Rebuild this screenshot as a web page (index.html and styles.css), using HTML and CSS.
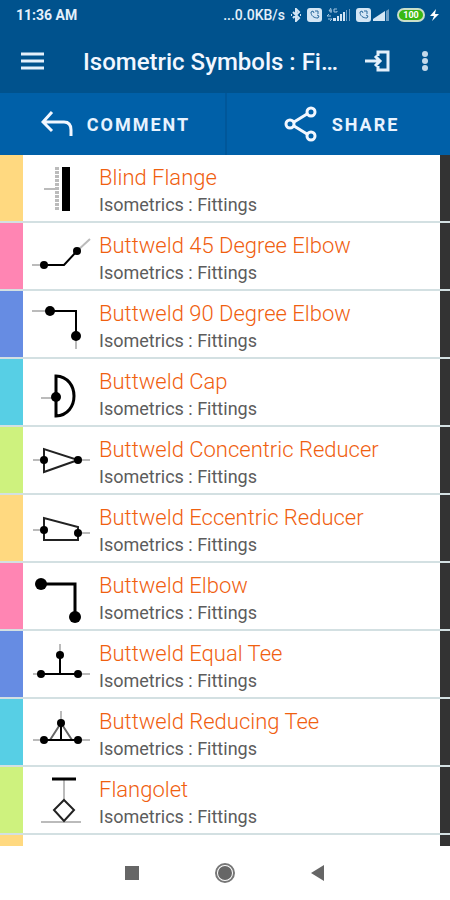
FILE: index.html
```html
<!DOCTYPE html>
<html lang="en">
<head>
    <meta charset="UTF-8">
    <meta name="viewport" content="width=device-width, initial-scale=1.0">
    <title>Isometric Symbols : Fittings</title>
    <link rel="stylesheet" href="styles.css">
</head>
<body>
    <div class="status-bar">
        <span class="clock">11:36 AM</span>
        <div class="status-icons">
            <span class="net-speed">...0.0KB/s</span>
            <svg class="bluetooth" width="12" height="14" viewBox="0 0 12 14"><path d="M3 4l6 6-3 3V1l3 3-6 6M1 7h1M10 7h1" /></svg>
            <svg class="volte" width="15" height="14" viewBox="0 0 15 14"><rect width="15" height="14" rx="3" /><path d="M4 4c0 4 3 6 7 6M4 4l2-1 1 2M11 10l1-2-2-1M8 3h3v3" /></svg>
            <svg class="signal" width="24" height="14" viewBox="0 0 24 14"><path d="M4 0L2 3h3M4 1v4M10 1H7v3h3V3M0 8h4M0 8l2-2M1 11h4l-2 2" class="network" /><path d="M6 10h3v3H6zM10 8h2v5h-2zM13 6h2v7h-2zM16 4h2v9h-2z" /><path class="dim" d="M19 2h1v11h-1zM22 1h1v12h-1z" /></svg>
            <svg class="volte" width="15" height="14" viewBox="0 0 15 14"><rect width="15" height="14" rx="3" /><path d="M4 4c0 4 3 6 7 6M4 4l2-1 1 2M11 10l1-2-2-1M8 3h3v3" /></svg>
            <svg class="signal last" width="17" height="14" viewBox="0 0 17 14"><path d="M0 13v-2l12-8v10z" /><path class="dim" d="M13 3l3-2v12h-3z" /></svg>
            <span class="battery">100</span>
            <svg class="bolt" width="9" height="12" viewBox="0 0 9 12"><path d="M6 0L0 7h4l-2 5 7-7H5z" /></svg>
        </div>
    </div>

    <header class="app-bar">
        <button type="button" class="icon-button" aria-label="Menu">
            <svg width="24" height="24" viewBox="0 0 24 24"><path d="M1 4h23M1 11h23M1 18h23" /></svg>
        </button>
        <h1>Isometric Symbols : Fi…</h1>
        <button type="button" class="icon-button" aria-label="Log in">
            <svg width="26" height="24" viewBox="0 0 26 24"><path d="M14 6V2h10v18H14v-4M1 11h15M11 6l5 5-5 5" /></svg>
        </button>
        <button type="button" class="icon-button more" aria-label="More options">
            <svg width="8" height="24" viewBox="0 0 8 24"><circle cx="4" cy="4" r="3" /><circle cx="4" cy="11" r="3" /><circle cx="4" cy="18" r="3" /></svg>
        </button>
    </header>

    <div class="actions">
        <button type="button">
            <svg width="32" height="26" viewBox="0 0 32 26"><path d="M11 1L2 11l9 9M2 11h21q7 0 7 8v6" /></svg>
            Comment
        </button>
        <button type="button">
            <svg width="34" height="36" viewBox="0 0 34 36"><circle cx="6" cy="18" r="4" /><circle cx="27" cy="6" r="4" /><circle cx="27" cy="30" r="4" /><path d="M10 16l13-8M10 20l13 8" /></svg>
            Share
        </button>
    </div>

    <main>
        <ul class="symbols">
            <li class="yellow">
                <a href="#">
                    <svg class="symbol" viewBox="0 0 76 66"><path class="thin" d="M21 34h11" /><path class="weld" d="M34 12v44" /><path class="solid" d="M39 12h8v44h-8z" /></svg>
                    <span class="text"><strong>Blind Flange</strong><small>Isometrics : Fittings</small></span>
                </a>
            </li>
            <li class="pink">
                <a href="#">
                    <svg class="symbol" viewBox="0 0 76 66"><path class="thin" d="M9 42h12M54 28l13-12" /><path d="M21 42h20l13-14" /><circle cx="21" cy="42" r="4" /><circle cx="54" cy="28" r="4" /></svg>
                    <span class="text"><strong>Buttweld 45 Degree Elbow</strong><small>Isometrics : Fittings</small></span>
                </a>
            </li>
            <li class="blue">
                <a href="#">
                    <svg class="symbol" viewBox="0 0 76 66"><path class="thin" d="M9 20h18M53 45v13" /><path d="M27 20h26v25" /><circle cx="27" cy="20" r="5" /><circle cx="53" cy="45" r="5" /></svg>
                    <span class="text"><strong>Buttweld 90 Degree Elbow</strong><small>Isometrics : Fittings</small></span>
                </a>
            </li>
            <li class="cyan">
                <a href="#">
                    <svg class="symbol" viewBox="0 0 76 66"><path class="thin" d="M18 39h15" /><path class="bold" d="M33 17v40C57 56 57 18 33 17z" /><circle cx="33" cy="38" r="5" /></svg>
                    <span class="text"><strong>Buttweld Cap</strong><small>Isometrics : Fittings</small></span>
                </a>
            </li>
            <li class="green">
                <a href="#">
                    <svg class="symbol" viewBox="0 0 76 66"><path class="thin" d="M10 33h11M55 33h12" /><path class="fine" d="M21 22v23l34-12z" /><circle cx="21" cy="33" r="4" /><circle cx="55" cy="33" r="4" /></svg>
                    <span class="text"><strong>Buttweld Concentric Reducer</strong><small>Isometrics : Fittings</small></span>
                </a>
            </li>
            <li class="yellow">
                <a href="#">
                    <svg class="symbol" viewBox="0 0 76 66"><path class="thin" d="M10 35h11M55 38h12" /><path class="fine" d="M21 23v22h34V32z" /><circle cx="21" cy="35" r="4" /><circle cx="55" cy="38" r="4" /></svg>
                    <span class="text"><strong>Buttweld Eccentric Reducer</strong><small>Isometrics : Fittings</small></span>
                </a>
            </li>
            <li class="pink">
                <a href="#">
                    <svg class="symbol" viewBox="0 0 76 66"><path class="bold" d="M18 21h34v33" /><circle cx="18" cy="21" r="6" /><circle cx="52" cy="54" r="6" /></svg>
                    <span class="text"><strong>Buttweld Elbow</strong><small>Isometrics : Fittings</small></span>
                </a>
            </li>
            <li class="blue">
                <a href="#">
                    <svg class="symbol" viewBox="0 0 76 66"><path class="thin" d="M10 43h57M37 13v11" /><path d="M18 43h37M37 24v19" /><circle cx="37" cy="24" r="4" /><circle cx="18" cy="43" r="4" /><circle cx="55" cy="43" r="4" /></svg>
                    <span class="text"><strong>Buttweld Equal Tee</strong><small>Isometrics : Fittings</small></span>
                </a>
            </li>
            <li class="cyan">
                <a href="#">
                    <svg class="symbol" viewBox="0 0 76 66"><path class="thin" d="M10 41h57M38 12v12" /><path class="slope" d="M38 24L27 41M38 24l11 17" /><path d="M21 41h34M38 24v17" /><circle cx="38" cy="24" r="4" /><circle cx="21" cy="41" r="4" /><circle cx="55" cy="41" r="4" /></svg>
                    <span class="text"><strong>Buttweld Reducing Tee</strong><small>Isometrics : Fittings</small></span>
                </a>
            </li>
            <li class="green">
                <a href="#">
                    <svg class="symbol" viewBox="0 0 76 66"><path class="thin" d="M41 13v20M18 55h40" /><path class="bold" d="M29 12h24" /><path class="fine" d="M41 33l10 10-10 11-10-11z" /></svg>
                    <span class="text"><strong>Flangolet</strong><small>Isometrics : Fittings</small></span>
                </a>
            </li>
            <li class="yellow">
                <a href="#" aria-label="Next symbol"></a>
            </li>
        </ul>
    </main>

    <nav class="system-nav">
        <button type="button" aria-label="Recent apps">
            <svg width="22" height="22" viewBox="0 0 22 22"><path d="M4 4h14v14H4z" /></svg>
        </button>
        <button type="button" aria-label="Home">
            <svg width="22" height="22" viewBox="0 0 22 22"><circle cx="11" cy="11" r="7" /><circle class="ring" cx="11" cy="11" r="9" /></svg>
        </button>
        <button type="button" aria-label="Back">
            <svg width="22" height="22" viewBox="0 0 22 22"><path d="M17 3v16L4 11z" /></svg>
        </button>
    </nav>
</body>
</html>
```

FILE: styles.css
```css
* {
    box-sizing: border-box;
}

body {
    display: flex;
    flex-direction: column;
    height: 100vh;
    margin: 0;
    background-color: #fff;
    font-family: Roboto, sans-serif;
}

button {
    padding: 0;
    border: none;
    background: none;
    color: inherit;
    font: inherit;
    cursor: pointer;
}

svg {
    flex: none;
    display: block;
}

/* status bar */
.status-bar {
    display: flex;
    justify-content: space-between;
    align-items: center;
    height: 30px;
    padding: 0 11px 0 16px;
    background-color: #00528d;
    color: #e4f0fb;
    font-size: 14px;
    font-weight: 700;
}

.status-icons {
    display: flex;
    align-items: center;
    gap: 5px;
}

.net-speed {
    font-weight: 500;
}

.bluetooth {
    fill: none;
    stroke: #d4e6f5;
    stroke-width: 2;
}

.volte rect {
    fill: #d4e6f5;
}

.volte path {
    fill: none;
    stroke: #2b6a9d;
}

.signal {
    fill: #d4e6f5;
}

.signal.last {
    margin: 0 2px 0 -3px;
}

.signal .dim {
    fill: #6c9dc4;
}

.signal .network {
    fill: none;
    stroke: #9fc2de;
}

.battery {
    width: 28px;
    border: 2px solid #c9dfc9;
    border-radius: 7px;
    background-color: #37b812;
    color: #fff;
    font-size: 9px;
    line-height: 10px;
    text-align: center;
}

.bolt {
    fill: #fff;
}

/* app bar */
.app-bar {
    display: flex;
    align-items: center;
    height: 63px;
    padding: 0 21px 0 20px;
    background-color: #00528d;
    color: #f2f7ff;
}

.app-bar h1 {
    flex: 1;
    margin: 0 20px 0 39px;
    overflow: hidden;
    font-size: 24px;
    font-weight: 500;
    text-overflow: ellipsis;
    white-space: nowrap;
}

.icon-button svg {
    fill: none;
    stroke: #e4f0fb;
    stroke-width: 3;
}

.more {
    margin-left: 31px;
}

.more svg {
    fill: #c4d9ea;
    stroke: none;
}

/* comment / share */
.actions {
    display: grid;
    grid-template-columns: 1fr 1fr;
    height: 62px;
    background-color: #0060a8;
    color: #e8f3ff;
}

.actions button {
    display: flex;
    justify-content: center;
    align-items: center;
    gap: 14px;
    padding-left: 6px;
    font-size: 18px;
    font-weight: 700;
    letter-spacing: 2px;
    text-transform: uppercase;
}

.actions button + button {
    border-left: 2px solid #00579a;
}

.actions svg {
    fill: none;
    stroke: #f2f7ff;
    stroke-width: 3;
}

/* symbol list */
main {
    flex: 1;
    overflow: hidden;
}

.symbols {
    margin: 0;
    padding: 0;
    list-style: none;
}

.symbols li {
    height: 68px;
    border-left: 23px solid;
    border-right: 10px solid #333;
    background-color: #fff;
}

.symbols .yellow {
    border-left-color: #ffd980;
}

.symbols .pink {
    border-left-color: #ff85b3;
}

.symbols .blue {
    border-left-color: #668ce3;
}

.symbols .cyan {
    border-left-color: #57cfe5;
}

.symbols .green {
    border-left-color: #cef27e;
}

.symbols a {
    display: flex;
    height: 68px;
    margin: 0 -10px 0 -23px;
    padding-left: 23px;
    border-bottom: 2px solid #d3e0e2;
    color: inherit;
    text-decoration: none;
}

.symbol {
    width: 76px;
    height: 66px;
    fill: none;
    stroke: #000;
    stroke-width: 2;
}

.symbol circle,
.symbol .solid {
    fill: #000;
    stroke: none;
}

.symbol .thin {
    stroke: #bbb;
}

.symbol .weld {
    stroke: #bbb;
    stroke-width: 4;
    stroke-dasharray: 3 1;
}

.symbol .fine {
    stroke: #222;
}

.symbol .slope {
    stroke: #666;
}

.symbol .bold {
    stroke-width: 3;
}

.text {
    display: flex;
    flex-direction: column;
    padding-top: 9px;
}

.text strong {
    color: #f0600f;
    font-size: 22px;
    font-weight: 300;
    line-height: 28px;
}

.text small {
    color: #5c5c5c;
    font-size: 18px;
    font-weight: 400;
    line-height: 25px;
}

/* system navigation */
.system-nav {
    display: flex;
    justify-content: center;
    align-items: center;
    gap: 71px;
    height: 54px;
    background-color: #fff;
}

.system-nav svg {
    fill: #666;
}

.system-nav .ring {
    fill: none;
    stroke: #777;
    stroke-width: 2;
}
```
